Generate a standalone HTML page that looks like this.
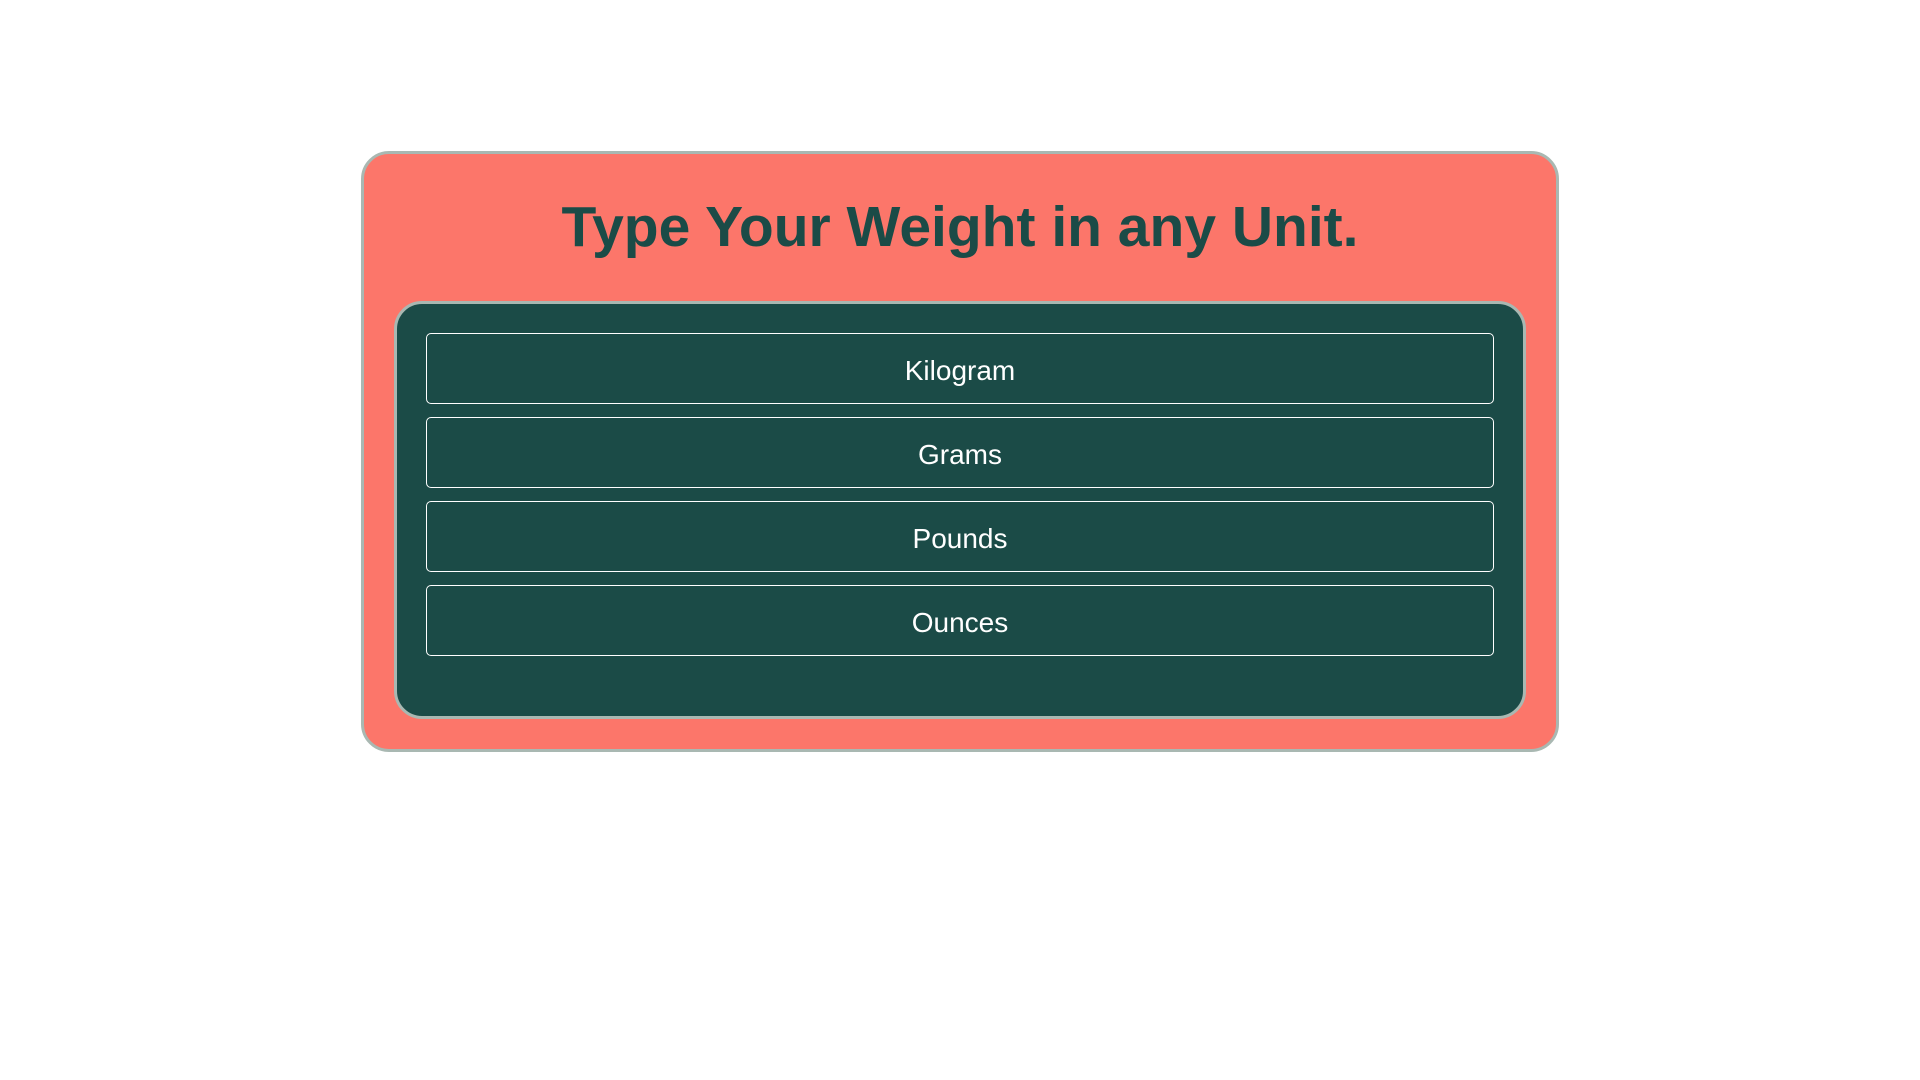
<!DOCTYPE html>
<html><head><style>
html,body{margin:0;background:#fff;width:1920px;height:1080px;overflow:hidden}
.outer{position:absolute;left:361px;top:151px;width:1192px;height:595px;background:#fc766a;border:3px solid #a9b8b2;border-radius:28px}
h1{position:absolute;left:0;right:0;top:40px;margin:0;text-align:center;font-family:"Liberation Sans",sans-serif;font-weight:bold;font-size:57px;color:#1b4b47}
.inner{position:absolute;left:30px;top:147px;width:1126px;height:412px;background:#1b4b47;border:3px solid #a9b8b2;border-radius:28px}
.btn{position:absolute;left:29px;width:1066px;height:69px;border:1px solid #fff;border-radius:5px;color:#fff;font-family:"Liberation Sans",sans-serif;font-size:28px;text-align:center;line-height:73px}
</style></head><body>
<div class="outer">
<h1>Type Your Weight in any Unit.</h1>
<div class="inner">
<div class="btn" style="top:29px">Kilogram</div>
<div class="btn" style="top:113px">Grams</div>
<div class="btn" style="top:197px">Pounds</div>
<div class="btn" style="top:281px">Ounces</div>
</div>
</div>
</body></html>
